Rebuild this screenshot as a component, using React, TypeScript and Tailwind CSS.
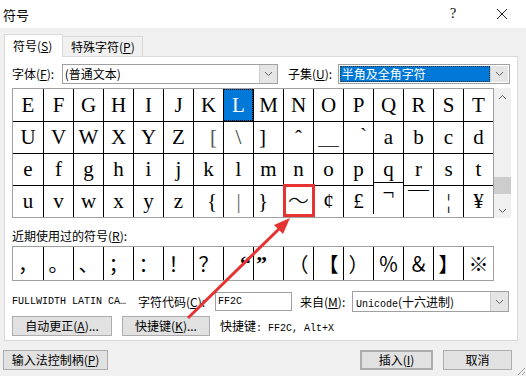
import React from 'react';

const serif = "font-['Liberation_Serif','Noto_Sans_CJK_SC',serif]";
const cjk = "font-['Noto_Sans_CJK_SC',sans-serif]";
const mono = "font-['Liberation_Mono','Noto_Sans_CJK_SC',monospace]";

const rows: string[][] = [
  ['E', 'F', 'G', 'H', 'I', 'J', 'K', 'L', 'M', 'N', 'O', 'P', 'Q', 'R', 'S', 'T'],
  ['U', 'V', 'W', 'X', 'Y', 'Z', '[', '\\', ']', 'ˆ', '＿', '`', 'a', 'b', 'c', 'd'],
  ['e', 'f', 'g', 'h', 'i', 'j', 'k', 'l', 'm', 'n', 'o', 'p', 'q', 'r', 's', 't'],
  ['u', 'v', 'w', 'x', 'y', 'z', '{', '|', '}', '～', '¢', '£', '¬', '￣', '¦', '¥'],
];

// per-cell tweaks for glyphs that sit off-centre in the original font
const tweaks: Record<string, string> = {
  '1-6': 'justify-end pr-[6px] text-[#555]',
  '1-7': 'text-[#333]',
  '1-8': 'justify-start pl-[5px]',
  '1-9': 'items-start pt-[6px] text-[18px]',
  '1-11': 'justify-end pr-[6px] items-start pt-[4px]',
  '3-6': 'justify-end pr-[6px]',
  '3-7': 'text-[#666]',
  '3-8': 'justify-start pl-[4px]',
  '3-9': 'text-[19px] font-light',
  '3-12': 'items-start -mt-[3px]',
};

const recent = ['，', '。', '、', '；', '：', '！', '？', '“', '”', '（', '【', '）', '％', '＆', '】', '※'];

function Acc({ k }: { k: string }) {
  return (
    <span>
      (<span className="underline">{k}</span>)
    </span>
  );
}

function Chevron({ up = false }: { up?: boolean }) {
  return (
    <svg width="9" height="6" viewBox="0 0 9 6">
      <path
        d={up ? 'M1 5 L4.5 1.5 L8 5' : 'M1 1 L4.5 4.5 L8 1'}
        fill="none"
        stroke="#606060"
        strokeWidth="1"
      />
    </svg>
  );
}

function DropButton() {
  return (
    <div className="w-[18px] h-full flex items-center justify-center bg-[#e5e5e5] border-l border-[#cccccc]">
      <Chevron />
    </div>
  );
}

function Button({ children, className = '' }: { children: React.ReactNode; className?: string }) {
  return (
    <div
      className={`h-[20px] flex items-center justify-center bg-[#e1e1e1] border border-[#adadad] text-[12px] ${className}`}
    >
      {children}
    </div>
  );
}

export default function App() {
  return (
    <div className={`relative w-[526px] h-[376px] overflow-hidden bg-[#f0f0f0] text-black ${cjk}`}>
      {/* title bar */}
      <div className="h-[28px] bg-white flex items-center pl-[3px]">
        <span className="text-[13px] leading-none">符号</span>
        <span className="ml-auto text-[14px] font-['Liberation_Serif',serif] leading-none w-[8px]">?</span>
        <svg className="ml-[38px] mr-[18px]" width="12" height="12" viewBox="0 0 12 12">
          <path d="M1 1 L11 11 M11 1 L1 11" stroke="#222" strokeWidth="1" />
        </svg>
      </div>

      {/* tabs */}
      <div className="mt-[5px] ml-[4px] flex items-end h-[23px]">
        <div className="relative z-10 w-[59px] h-[23px] -mb-px bg-white border border-b-0 border-[#d9d9d9] flex items-center pl-[8px] text-[12px]">
          符号<Acc k="S" />
        </div>
        <div className="w-[80px] h-[20px] bg-[#f0f0f0] border border-l-0 border-b-0 border-[#d9d9d9] flex items-center pl-[8px] text-[12px]">
          特殊字符<Acc k="P" />
        </div>
      </div>

      {/* panel */}
      <div className="ml-[4px] w-[514px] h-[285px] bg-white border border-[#d9d9d9] px-[7px] text-[12px]">
        {/* font row */}
        <div className="mt-[7px] flex items-center h-[20px]">
          <span className="w-[50px]">
            字体<Acc k="F" />:
          </span>
          <div className="w-[217px] h-[20px] flex border border-[#a0a0a0]">
            <span className="flex-1 pl-[2px] leading-[18px]">(普通文本)</span>
            <DropButton />
          </div>
          <span className="ml-[10px] w-[50px]">
            子集<Acc k="U" />:
          </span>
          <div className="w-[173px] h-[20px] flex border border-[#a0a0a0] p-px">
            <span className="flex-1 bg-[#0078d7] text-white pl-[2px] leading-[16px] outline outline-1 outline-dotted outline-[#333] -outline-offset-1">
              半角及全角字符
            </span>
            <DropButton />
          </div>
        </div>

        {/* symbol grid */}
        <div className="mt-[4px] flex">
          <div className="w-[482px] border border-[#a0a0a0]">
            {rows.map((row, ri) => (
              <div key={ri} className="flex">
                {row.map((c, ci) => {
                  const selected = ri === 0 && ci === 7;
                  return (
                    <div
                      key={ci}
                      className={[
                        'w-[30px] h-[32px] flex items-center justify-center text-[21px] leading-none',
                        serif,
                        ci > 0 ? 'border-l border-black' : '',
                        ri > 0 ? 'border-t border-black' : '',
                        selected
                          ? 'bg-[#0078d7] text-white outline outline-1 outline-dotted outline-black -outline-offset-1'
                          : '',
                        tweaks[`${ri}-${ci}`] ?? '',
                      ].join(' ')}
                    >
                      {c}
                    </div>
                  );
                })}
              </div>
            ))}
          </div>
          <div className="w-[17px] h-[130px] bg-[#f0f0f0] flex flex-col items-center">
            <div className="h-[17px] flex items-center justify-center">
              <Chevron up />
            </div>
            <div className="flex-1" />
            <div className="w-[17px] h-[17px] bg-[#cdcdcd]" />
            <div className="h-[10px]" />
            <div className="h-[14px] flex items-center justify-center">
              <Chevron />
            </div>
          </div>
        </div>

        {/* recent */}
        <div className="mt-[10px] h-[16px] leading-[16px]">
          近期使用过的符号<Acc k="R" />:
        </div>
        <div className="mt-[2px] w-[482px] border border-[#a0a0a0] flex">
          {recent.map((c, i) => (
            <div
              key={i}
              className={[
                'w-[30px] h-[33px] flex items-center text-[20px] leading-none',
                i > 0 ? 'border-l border-black' : '',
                i === 7 ? `justify-end pr-[2px] ${serif} font-bold text-[22px]` : '',
                i === 8 ? `justify-start pl-[2px] ${serif} font-bold text-[22px]` : '',
                i !== 7 && i !== 8 ? `justify-center ${cjk}` : '',
              ].join(' ')}
            >
              {c}
            </div>
          ))}
        </div>

        {/* info row */}
        <div className="mt-[10px] h-[21px] flex items-center">
          <span className={`w-[120px] text-[10px] ${mono}`}>FULLWIDTH LATIN CA…</span>
          <span className="ml-[6px] w-[77px]">
            字符代码<Acc k="C" />:
          </span>
          <div className={`w-[77px] h-[19px] border border-[#a0a0a0] pl-[2px] leading-[17px] text-[10px] ${mono}`}>
            FF2C
          </div>
          <span className="ml-[8px] w-[52px]">
            来自<Acc k="M" />:
          </span>
          <div className="w-[157px] h-[21px] flex border border-[#a0a0a0]">
            <span className="flex-1 pl-[3px] leading-[19px]">
              <span className={`text-[10px] ${mono}`}>Unicode</span>(十六进制)
            </span>
            <DropButton />
          </div>
        </div>

        {/* buttons row */}
        <div className="mt-[4px] flex items-center">
          <Button className="w-[100px] h-[19px]">
            自动更正<Acc k="A" />...
          </Button>
          <Button className="ml-[10px] w-[88px] h-[19px]">
            快捷键<Acc k="K" />...
          </Button>
          <span className="ml-[10px]">
            快捷键<span className={`text-[10px] ${mono}`}>: FF2C, Alt+X</span>
          </span>
        </div>
      </div>

      {/* bottom buttons */}
      <div className="mt-[9px] flex items-center pl-[3px] pr-[14px]">
        <Button className="w-[105px]">
          输入法控制柄<Acc k="P" />
        </Button>
        <Button className="ml-auto w-[73px] border-2 border-[#0078d7]">
          插入<Acc k="I" />
        </Button>
        <Button className="ml-[10px] w-[69px]">取消</Button>
      </div>

      {/* resize grip */}
      <svg className="absolute right-0 bottom-0" width="12" height="12" viewBox="0 0 12 12">
        <path d="M11 4 L4 11 M11 8 L8 11" stroke="#a0a0a0" strokeWidth="1" />
      </svg>

      {/* annotation: red box + arrow */}
      <div className="absolute left-[283px] top-[184px] w-[32px] h-[33px] border-[3px] border-[#e53333]" />
      <svg className="absolute left-0 top-0 pointer-events-none" width="526" height="376">
        <line x1="188" y1="318" x2="280" y2="228" stroke="#e53333" strokeWidth="3" />
        <polygon points="290,218 283,234 274,225" fill="#e53333" />
      </svg>
    </div>
  );
}
